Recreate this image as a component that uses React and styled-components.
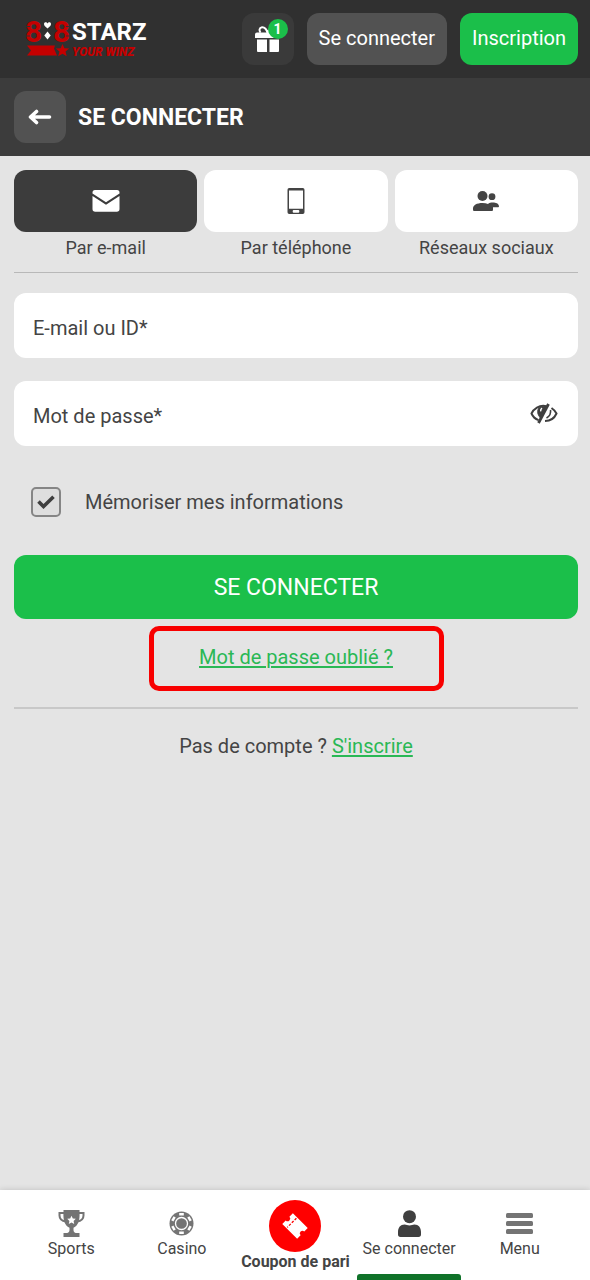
import React, { useState } from "react";
import styled, { createGlobalStyle } from "styled-components";

const GlobalStyle = createGlobalStyle`
  *, *::before, *::after { box-sizing: border-box; }
  body {
    margin: 0;
    background: #e4e4e4;
    color: #444;
    font-family: Roboto, "Liberation Sans", sans-serif;
    font-size: 20px;
  }
  button, input { font: inherit; color: inherit; }
`;

const Page = styled.div`
  display: flex;
  flex-direction: column;
  min-height: 100vh;
`;

const Header = styled.header`
  display: flex;
  align-items: center;
  gap: 13px;
  height: 78px;
  padding: 0 12px 0 26px;
  background: #303030;
`;

const LogoLink = styled.a`
  display: flex;
  margin-right: auto;
`;

const HeaderButton = styled.button`
  height: 52px;
  padding: 0 12px 2px;
  border: 0;
  border-radius: 12px;
  background: ${(p) => (p.$primary ? "#1bbf4a" : "#525252")};
  color: #fff;
  white-space: nowrap;
`;

const IconButton = styled.button`
  position: relative;
  display: flex;
  align-items: center;
  justify-content: center;
  width: 52px;
  height: 52px;
  padding: 0;
  border: 0;
  border-radius: 12px;
  background: ${(p) => (p.$dim ? "#3a3a3a" : "#525252")};
  color: #fff;
`;

const Badge = styled.span`
  position: absolute;
  top: 6px;
  right: 6px;
  width: 20px;
  border-radius: 10px;
  background: #1bbf4a;
  font-size: 14px;
  font-weight: 700;
  line-height: 20px;
  text-align: center;
`;

const TitleBar = styled.div`
  display: flex;
  align-items: center;
  gap: 12px;
  height: 78px;
  padding: 0 14px;
  background: #3c3c3c;
`;

const Title = styled.h1`
  margin: 0;
  color: #fff;
  font-size: 23px;
  font-weight: 700;
`;

const Main = styled.main`
  flex: 1;
  padding: 14px 12px 0 14px;
`;

const Tabs = styled.div`
  display: grid;
  grid-template-columns: repeat(3, 1fr);
  gap: 7px;
  padding-bottom: 8px;
  border-bottom: 1px solid #b8b8b8;
`;

const Tab = styled.button`
  display: flex;
  flex-direction: column;
  padding: 0;
  border: 0;
  background: none;
  font-size: 18px;
  line-height: 32px;
`;

const TabFace = styled.span`
  display: flex;
  align-items: center;
  justify-content: center;
  width: 100%;
  height: 62px;
  border-radius: 12px;
  background: ${(p) => (p.$active ? "#3c3c3c" : "#fff")};
  color: ${(p) => (p.$active ? "#fff" : "#444")};
`;

const TabLabel = styled.span`
  width: 100%;
  text-align: center;
`;

const Form = styled.form`
  display: flex;
  flex-direction: column;
  padding: 20px 0 16px;
  border-bottom: 2px solid #c8c8c8;
`;

const Field = styled.div`
  display: flex;
  align-items: center;
  height: 65px;
  margin-bottom: 23px;
  padding: 0 20px 0 19px;
  border-radius: 12px;
  background: #fff;
`;

const FieldInput = styled.input`
  flex: 1;
  min-width: 0;
  height: 100%;
  padding: 4px 0 0;
  border: 0;
  outline: 0;
  background: none;
  &::placeholder { color: #444; opacity: 1; }
`;

const RevealButton = styled.button`
  display: flex;
  padding: 0;
  border: 0;
  background: none;
`;

const Remember = styled.label`
  display: flex;
  align-items: center;
  gap: 24px;
  margin: 18px 0 38px;
  padding-left: 17px;
`;

const CheckShell = styled.span`
  display: grid;
  place-items: center;
  width: 30px;
  height: 30px;
  > * { grid-area: 1 / 1; }
  svg { pointer-events: none; }
`;

const CheckInput = styled.input`
  appearance: none;
  width: 30px;
  height: 30px;
  margin: 0;
  border: 2px solid #858585;
  border-radius: 5px;
  background: #dedede;
  & + svg { visibility: hidden; }
  &:checked + svg { visibility: visible; }
`;

const Submit = styled.button`
  height: 64px;
  border: 0;
  border-radius: 12px;
  background: #1bbf4a;
  color: #fff;
  font-size: 23px;
`;

const TextLink = styled.a`
  color: #2ab855;
  text-decoration: underline;
  text-decoration-thickness: 2px;
  text-underline-offset: 2px;
`;

const Highlight = styled.div`
  display: flex;
  align-items: center;
  justify-content: center;
  align-self: center;
  width: 295px;
  height: 65px;
  margin-top: 7px;
  padding-bottom: 4px;
  border: 5px solid #f80000;
  border-radius: 10px;
`;

const Signup = styled.p`
  margin: 25px 0;
  line-height: 24px;
  text-align: center;
`;

const Nav = styled.nav`
  position: sticky;
  bottom: 0;
  display: grid;
  grid-template-columns: 110fr 110fr 116fr 110fr 110fr;
  height: 90px;
  padding: 0 15px 0 16px;
  background: #fff;
  box-shadow: 0 0 6px rgba(0, 0, 0, 0.16);
`;

const NavItem = styled.a`
  position: relative;
  display: flex;
  flex-direction: column;
  align-items: center;
  padding-top: 20px;
  color: ${(p) => (p.$active ? "#3f3f3f" : "#747474")};
  text-decoration: none;
  &::after {
    content: "";
    display: ${(p) => (p.$active ? "block" : "none")};
    position: absolute;
    right: 3px;
    bottom: 0;
    left: 3px;
    height: 6px;
    border-radius: 3px 3px 0 0;
    background: #0f7229;
  }
`;

const NavLabel = styled.span`
  color: #444;
  font-size: 16px;
  line-height: 24px;
  white-space: nowrap;
`;

const CouponItem = styled(NavItem)`
  padding-top: 10px;
  ${NavLabel} { font-weight: 700; line-height: 20px; }
`;

const CouponDisc = styled.span`
  display: flex;
  align-items: center;
  justify-content: center;
  width: 52px;
  height: 52px;
  border-radius: 50%;
  background: #f00;
`;

const LogoSvg = styled.svg`
  overflow: visible;
`;

const LogoText = styled.text`
  fill: ${(p) => p.fill};
  font-family: Roboto, sans-serif;
  font-size: ${(p) => p.$size}px;
  font-weight: ${(p) => (p.$heavy ? 900 : 700)};
  font-style: ${(p) => (p.$italic ? "italic" : "normal")};
`;

const Logo = () => (
  <LogoSvg width="124" height="42" viewBox="0 0 124 42" role="img" aria-label="888Starz Your Winz">
    <LogoText x="-1" y="24" $size={30} fill="#c40000">8</LogoText>
    <LogoText x="27" y="24" $size={30} fill="#c40000">8</LogoText>
    <path d="M0 8.500h4M0 18h4M12 12.800h5M26 12.800h5M40 8.500h4M40 18h4" stroke="#303030" />
    <path d="M21.500 10.500c-2-2-3.500-2.700-3.500-4.500 0-2.400 2.800-2.200 3.500-.6.7-1.600 3.500-1.800 3.500.6 0 1.800-1.500 2.500-3.500 4.500z" fill="#fff" />
    <path d="M21.500 13.500l3.200 4-3.200 4-3.200-4z" fill="#fff" />
    <LogoText x="46" y="22" $size={24} fill="#fff">STARZ</LogoText>
    <path d="M1 27.500h28l-1 3 3 7H1l4-5z" fill="#c40000" />
    <path d="M36.500 26l1.900 4.300 4.800.3-3.700 3 1.200 4.700-4.200-2.500-4.300 2.500 1.300-4.700-3.700-3 4.800-.3z" fill="#c40000" />
    <LogoText x="46" y="38" $size={12} $heavy $italic fill="#c40000">YOUR WINZ</LogoText>
  </LogoSvg>
);

const GiftIcon = () => (
  <svg width="26" height="28" viewBox="0 0 26 28" fill="currentColor">
    <path d="M2 7.500h10.500v5.500H0V9.500a2 2 0 0 1 2-2zM12 7.500H24a2 2 0 0 1 2 2V13H12zM2 14.500h10V27H3a1 1 0 0 1-1-1zM14.500 14.500H24V26a1 1 0 0 1-1 1h-8.500z" />
    <path d="M12.500 8C12 4.500 9.500 2 7 2.200 4 2.500 4 6 5.500 7.700M13 8c.5-3.500 3-6 5.500-5.800" fill="none" stroke="currentColor" strokeWidth="2" />
  </svg>
);

const BackIcon = () => (
  <svg width="24" height="18" viewBox="0 0 24 18" fill="none" stroke="#fff" strokeWidth="3.600" strokeLinecap="round" strokeLinejoin="round">
    <path d="M3 9h18.500M8.500 3.500L2.500 9l6 5.500" />
  </svg>
);

const MailIcon = () => (
  <svg width="28" height="22" viewBox="0 0 28 22" fill="currentColor">
    <path d="M3 0h22a2.500 2.500 0 0 1 2.500 2.500v1L14 12.300.5 3.500v-1A2.500 2.500 0 0 1 3 0z" />
    <path d="M.5 5.900L14 14.800l13.500-8.900V19a2.700 2.700 0 0 1-2.700 2.700H3.200A2.700 2.700 0 0 1 .5 19z" />
  </svg>
);

const PhoneIcon = () => (
  <svg width="18" height="26" viewBox="0 0 18 26" fill="currentColor" fillRule="evenodd">
    <path d="M2.200 0h13.600A1.700 1.700 0 0 1 17.500 1.700v22.600a1.700 1.700 0 0 1-1.700 1.700H2.200A1.700 1.700 0 0 1 .5 24.300V1.700A1.700 1.700 0 0 1 2.200 0zM2 2.500v18.200h14V2.500zM6.700 22h4.600a1 1 0 0 1 1 1v.7a1 1 0 0 1-1 1H6.700a1 1 0 0 1-1-1V23a1 1 0 0 1 1-1z" />
  </svg>
);

const PeopleIcon = () => (
  <svg width="28" height="20" viewBox="0 0 28 20" fill="currentColor">
    <circle cx="10.500" cy="5" r="5" />
    <circle cx="20" cy="5.700" r="3.400" />
    <path d="M1 18.500c-.5-4.500 4-6.500 9.500-6.500 2.200 0 4 .3 5.500.9 2.500-2 10.500-2 11 2.300 0 .8-.5 1.100-1 1.100h-5v2.200c0 1-.5 1.500-1.500 1.500h-17C1.500 20 1 19.500 1 18.500z" />
  </svg>
);

const EyeOffIcon = () => (
  <svg width="28" height="22" viewBox="0 0 28 22" fill="none" stroke="#3f3f3f" strokeWidth="2">
    <path d="M16.500 3.200C9 1.500 3.500 6 1.500 10.500c1.300 3 4 5.500 7 6.600M21.500 5c2.200 1.500 4 3.500 5 5.500-2 4.500-6.500 7.500-11.500 7.600" />
    <path d="M8.500 5.500c-2 4 .2 7.500 2 9.500L17 4c-3-1.500-6-1-8.500 1.500z" fill="#3f3f3f" strokeWidth="1" />
    <path d="M12 5.200c-1.200.8-1.500 2-1.300 3.200" stroke="#fff" strokeWidth="1.500" />
    <path d="M18.500 1L8.500 20" strokeWidth="2.800" />
    <path d="M20.500 7c.5 3-1 6.300-4 8" strokeWidth="1.600" />
  </svg>
);

const CheckIcon = () => (
  <svg width="18" height="14" viewBox="0 0 18 14" fill="none" stroke="#3f3f3f" strokeWidth="3.600">
    <path d="M1.500 6.500l5 5L16.500 1.700" />
  </svg>
);

const TrophyIcon = () => (
  <svg width="27" height="27" viewBox="0 0 27 27">
    <path d="M7 3H1.500v2.500c0 3.300 2.500 5.500 6.500 6M20 3h5.500v2.500c0 3.300-2.500 5.500-6.500 6" fill="none" stroke="currentColor" strokeWidth="2" />
    <path d="M5.500 0h16v2c.5 8-1 13.500-6 15.700V20c0 1.700 1 2.700 2.500 3h3.500v4h-16v-4H9c1.500-.3 2.500-1.300 2.500-3v-2.300C6.500 15.500 5 10 5.500 2z" fill="currentColor" />
    <path d="M13.500 5.700l1.300 2.700 3 .4-2.200 2.100.6 3-2.700-1.500-2.700 1.500.6-3-2.200-2.100 3-.4z" fill="#fff" />
  </svg>
);

const ChipIcon = () => (
  <svg width="25" height="27" viewBox="0 0 25 27">
    <circle cx="12.500" cy="13.500" r="12" fill="currentColor" />
    <circle cx="12.500" cy="13.500" r="6" fill="none" stroke="#fff" strokeWidth="1.300" />
    {[0, 60, 120, 180, 240, 300].map((angle) => (
      <rect key={angle} x="10.200" y="3" width="4.600" height="2.500" fill="#fff" transform={`rotate(${angle} 12.500 13.500)`} />
    ))}
  </svg>
);

const TicketIcon = () => (
  <svg width="28" height="28" viewBox="0 0 28 28">
    <g transform="rotate(45 14 14)">
      <path d="M3.500 6.500h21v4.900a2.600 2.600 0 0 0 0 5.200v4.900h-21v-4.900a2.600 2.600 0 0 0 0-5.200z" fill="#fff" />
      <path d="M9.500 7.500v13" stroke="#f00" strokeWidth="1.300" strokeDasharray="2.500 1.500" />
    </g>
  </svg>
);

const UserIcon = () => (
  <svg width="25" height="27" viewBox="0 0 25 27" fill="currentColor">
    <circle cx="12.500" cy="6.700" r="6.500" />
    <path d="M1 24.500V22c0-4.500 2.500-7.500 6.500-7.500 2 0 2.800 1 5 1s3-1 5-1c4 0 6.500 3 6.500 7.500v2.500c0 1.500-.8 2.500-2.500 2.500h-18C1.800 27 1 26 1 24.500z" />
  </svg>
);

const MenuIcon = () => (
  <svg width="27" height="27" viewBox="0 0 27 27" fill="currentColor">
    <rect y="3" width="27" height="5" rx="1.500" />
    <rect y="11" width="27" height="5" rx="1.500" />
    <rect y="19" width="27" height="5" rx="1.500" />
  </svg>
);

const methods = [
  { id: "email", label: "Par e-mail", Icon: MailIcon },
  { id: "phone", label: "Par téléphone", Icon: PhoneIcon },
  { id: "social", label: "Réseaux sociaux", Icon: PeopleIcon },
];

export default function App() {
  const [method, setMethod] = useState("email");
  const [visible, setVisible] = useState(false);

  return (
    <Page>
      <GlobalStyle />
      <Header>
        <LogoLink href="#"><Logo /></LogoLink>
        <IconButton type="button" $dim aria-label="Cadeaux">
          <GiftIcon />
          <Badge>1</Badge>
        </IconButton>
        <HeaderButton type="button">Se connecter</HeaderButton>
        <HeaderButton type="button" $primary>Inscription</HeaderButton>
      </Header>
      <TitleBar>
        <IconButton type="button" aria-label="Retour"><BackIcon /></IconButton>
        <Title>SE CONNECTER</Title>
      </TitleBar>
      <Main>
        <Tabs role="tablist">
          {methods.map(({ id, label, Icon }) => (
            <Tab key={id} type="button" role="tab" aria-selected={method === id} onClick={() => setMethod(id)}>
              <TabFace $active={method === id}><Icon /></TabFace>
              <TabLabel>{label}</TabLabel>
            </Tab>
          ))}
        </Tabs>
        <Form onSubmit={(e) => e.preventDefault()}>
          <Field>
            <FieldInput type="text" placeholder="E-mail ou ID*" aria-label="E-mail ou ID" />
          </Field>
          <Field>
            <FieldInput type={visible ? "text" : "password"} placeholder="Mot de passe*" aria-label="Mot de passe" />
            <RevealButton type="button" aria-label="Afficher le mot de passe" onClick={() => setVisible(!visible)}>
              <EyeOffIcon />
            </RevealButton>
          </Field>
          <Remember>
            <CheckShell>
              <CheckInput type="checkbox" defaultChecked />
              <CheckIcon />
            </CheckShell>
            Mémoriser mes informations
          </Remember>
          <Submit type="submit">SE CONNECTER</Submit>
          <Highlight><TextLink href="#">Mot de passe oublié ?</TextLink></Highlight>
        </Form>
        <Signup>Pas de compte ? <TextLink href="#">S'inscrire</TextLink></Signup>
      </Main>
      <Nav>
        <NavItem href="#"><TrophyIcon /><NavLabel>Sports</NavLabel></NavItem>
        <NavItem href="#"><ChipIcon /><NavLabel>Casino</NavLabel></NavItem>
        <CouponItem href="#"><CouponDisc><TicketIcon /></CouponDisc><NavLabel>Coupon de pari</NavLabel></CouponItem>
        <NavItem href="#" $active><UserIcon /><NavLabel>Se connecter</NavLabel></NavItem>
        <NavItem href="#"><MenuIcon /><NavLabel>Menu</NavLabel></NavItem>
      </Nav>
    </Page>
  );
}
